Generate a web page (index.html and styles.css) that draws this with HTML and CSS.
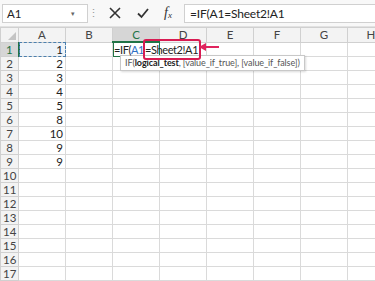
FILE: index.html
```html
<!DOCTYPE html>
<html lang="en">

<head>
    <meta charset="UTF-8">
    <title>IF formula</title>
    <link rel="stylesheet" href="styles.css">
</head>

<body>
    <div class="formula-bar">
        <div class="name-box">
            <span>A1</span>
            <span class="caret">&#9662;</span>
        </div>
        <span class="grip">&#8942;</span>
        <div class="fx-buttons">
            <svg width="14" height="14" viewBox="0 0 14 14"><path d="M2 2 L12 12 M12 2 L2 12" stroke="#333" stroke-width="1.6" fill="none"/></svg>
            <svg width="14" height="14" viewBox="0 0 14 14"><path d="M2 7.5 L5.5 11 L12 3" stroke="#333" stroke-width="1.8" fill="none"/></svg>
            <span class="fx">f<sub>x</sub></span>
        </div>
        <div class="formula-input">=IF(A1=Sheet2!A1</div>
    </div>

    <div class="sheet">
        <table class="grid">
            <thead>
                <tr>
                    <th class="corner"><span class="tri"></span></th>
                    <th>A</th>
                    <th>B</th>
                    <th class="active-col">C</th>
                    <th>D</th>
                    <th>E</th>
                    <th>F</th>
                    <th>G</th>
                    <th>H</th>
                </tr>
            </thead>
            <tbody id="rows">
                <tr>
                    <th class="active-row">1</th>
                    <td class="num copy">1</td>
                    <td></td>
                    <td class="editing"><span class="edit">=IF(<span class="ref">A1</span><span class="boxed">=Sheet2!A1</span></span></td>
                    <td></td><td></td><td></td><td></td><td></td>
                </tr>
            </tbody>
        </table>

        <svg class="arrow" width="22" height="10" viewBox="0 0 22 10">
            <path d="M1 5 L8 1 L8 4 L21 4 L21 6 L8 6 L8 9 Z" fill="#e0245e"/>
        </svg>

        <div class="tip">IF(<b>logical_test</b>, [value_if_true], [value_if_false])</div>
    </div>

    <script>
        var valores = [2, 3, 4, 5, 8, 10, 9, 9];
        var body = document.getElementById('rows');
        for (var i = 2; i <= 17; i++) {
            var fila = '<tr><th>' + i + '</th>';
            var v = valores[i - 2];
            fila += '<td class="num">' + (v !== undefined ? v : '') + '</td>';
            for (var c = 0; c < 7; c++) {
                fila += '<td></td>';
            }
            fila += '</tr>';
            body.insertAdjacentHTML('beforeend', fila);
        }
        // fila 18 solo asoma por abajo
        body.insertAdjacentHTML('beforeend', '<tr class="peek"><th></th><td></td><td></td><td></td><td></td><td></td><td></td><td></td><td></td></tr>');
    </script>
</body>

</html>
```

FILE: styles.css
```css
body {
    margin: 0;
    background-color: #ffffff;
    font-family: Lato, "Open Sans", sans-serif;
    font-size: 11px;
    color: #222;
    overflow: hidden;
}

.formula-bar {
    display: flex;
    align-items: center;
    height: 27px;
    padding: 0 0 0 2px;
    background-color: #f8f8f8;
    border-bottom: 1px solid #e2e2e2;
    box-sizing: border-box;
}

.name-box {
    display: flex;
    align-items: center;
    justify-content: space-between;
    width: 86px;
    height: 19px;
    padding: 0 12px 0 4px;
    box-sizing: border-box;
    background-color: #ffffff;
    border: 1px solid #d0d0d0;
    font-size: 11.5px;
}

.caret {
    font-size: 7px;
    color: #666;
}

.grip {
    width: 10px;
    text-align: center;
    color: #999;
    font-size: 11px;
}

.fx-buttons {
    display: flex;
    align-items: center;
    width: 86px;
    padding-left: 10px;
    gap: 14px;
    box-sizing: border-box;
}

.fx {
    font-family: "Liberation Serif", serif;
    font-style: italic;
    font-size: 14px;
    color: #333;
}

.fx sub {
    font-size: 9px;
    vertical-align: -1px;
}

.formula-input {
    flex: 1;
    height: 19px;
    line-height: 18px;
    padding-left: 5px;
    background-color: #ffffff;
    border: 1px solid #d0d0d0;
    border-right: none;
    font-size: 12px;
    letter-spacing: -0.2px;
    box-sizing: border-box;
}

.sheet {
    position: relative;
}

.grid {
    border-collapse: collapse;
    table-layout: fixed;
    width: 394px;
}

.grid th,
.grid td {
    height: 13px;
    padding: 0 2px;
    border: 1px solid #dadada;
    font-weight: normal;
    font-size: 11.5px;
    line-height: 13px;
    white-space: nowrap;
    overflow: visible;
}

.grid thead th {
    width: 42px;
    height: 12px;
    background-color: #f3f3f3;
    color: #444;
    border-color: #d0d0d0;
    text-align: center;
}

.grid thead th.corner {
    width: 13px;
    position: relative;
}

.tri {
    position: absolute;
    right: 2px;
    bottom: 2px;
    width: 0;
    height: 0;
    border-left: 8px solid transparent;
    border-bottom: 8px solid #c4c4c4;
}

.grid tbody th {
    background-color: #f3f3f3;
    color: #444;
    border-color: #d0d0d0;
    text-align: center;
}

.grid thead th.active-col {
    background-color: #d6d6d6;
    color: #217346;
    border-bottom: 2px solid #217346;
}

.grid tbody th.active-row {
    background-color: #d6d6d6;
    color: #217346;
    border-right: 2px solid #217346;
}

.num {
    text-align: right;
}

.copy {
    background-color: #eef3f8;
    outline: 1px dashed #4a7fae;
    outline-offset: -1px;
}

.editing {
    outline: 1px solid #217346;
    outline-offset: -1px;
    position: relative;
}

.edit {
    position: relative;
    z-index: 2;
    margin-left: -1px;
    font-size: 11px;
    letter-spacing: -0.4px;
}

.ref {
    color: #2e6fc6;
}

.boxed {
    padding: 2px 1px 2px 0;
    margin-left: -1px;
    border: 2px solid #d81b52;
    border-radius: 3px;
}

.arrow {
    position: absolute;
    left: 198px;
    top: 15px;
    z-index: 3;
}

.tip {
    position: absolute;
    left: 120px;
    top: 28px;
    padding: 1px 4px;
    background-color: #ffffff;
    border: 1px solid #c8c8c8;
    color: #555;
    font-size: 9px;
    letter-spacing: -0.1px;
    line-height: 12px;
    white-space: nowrap;
    box-shadow: 1px 1px 2px rgba(0, 0, 0, 0.15);
}

.tip b {
    color: #222;
}

.peek th,
.peek td {
    height: 6px;
}
```
